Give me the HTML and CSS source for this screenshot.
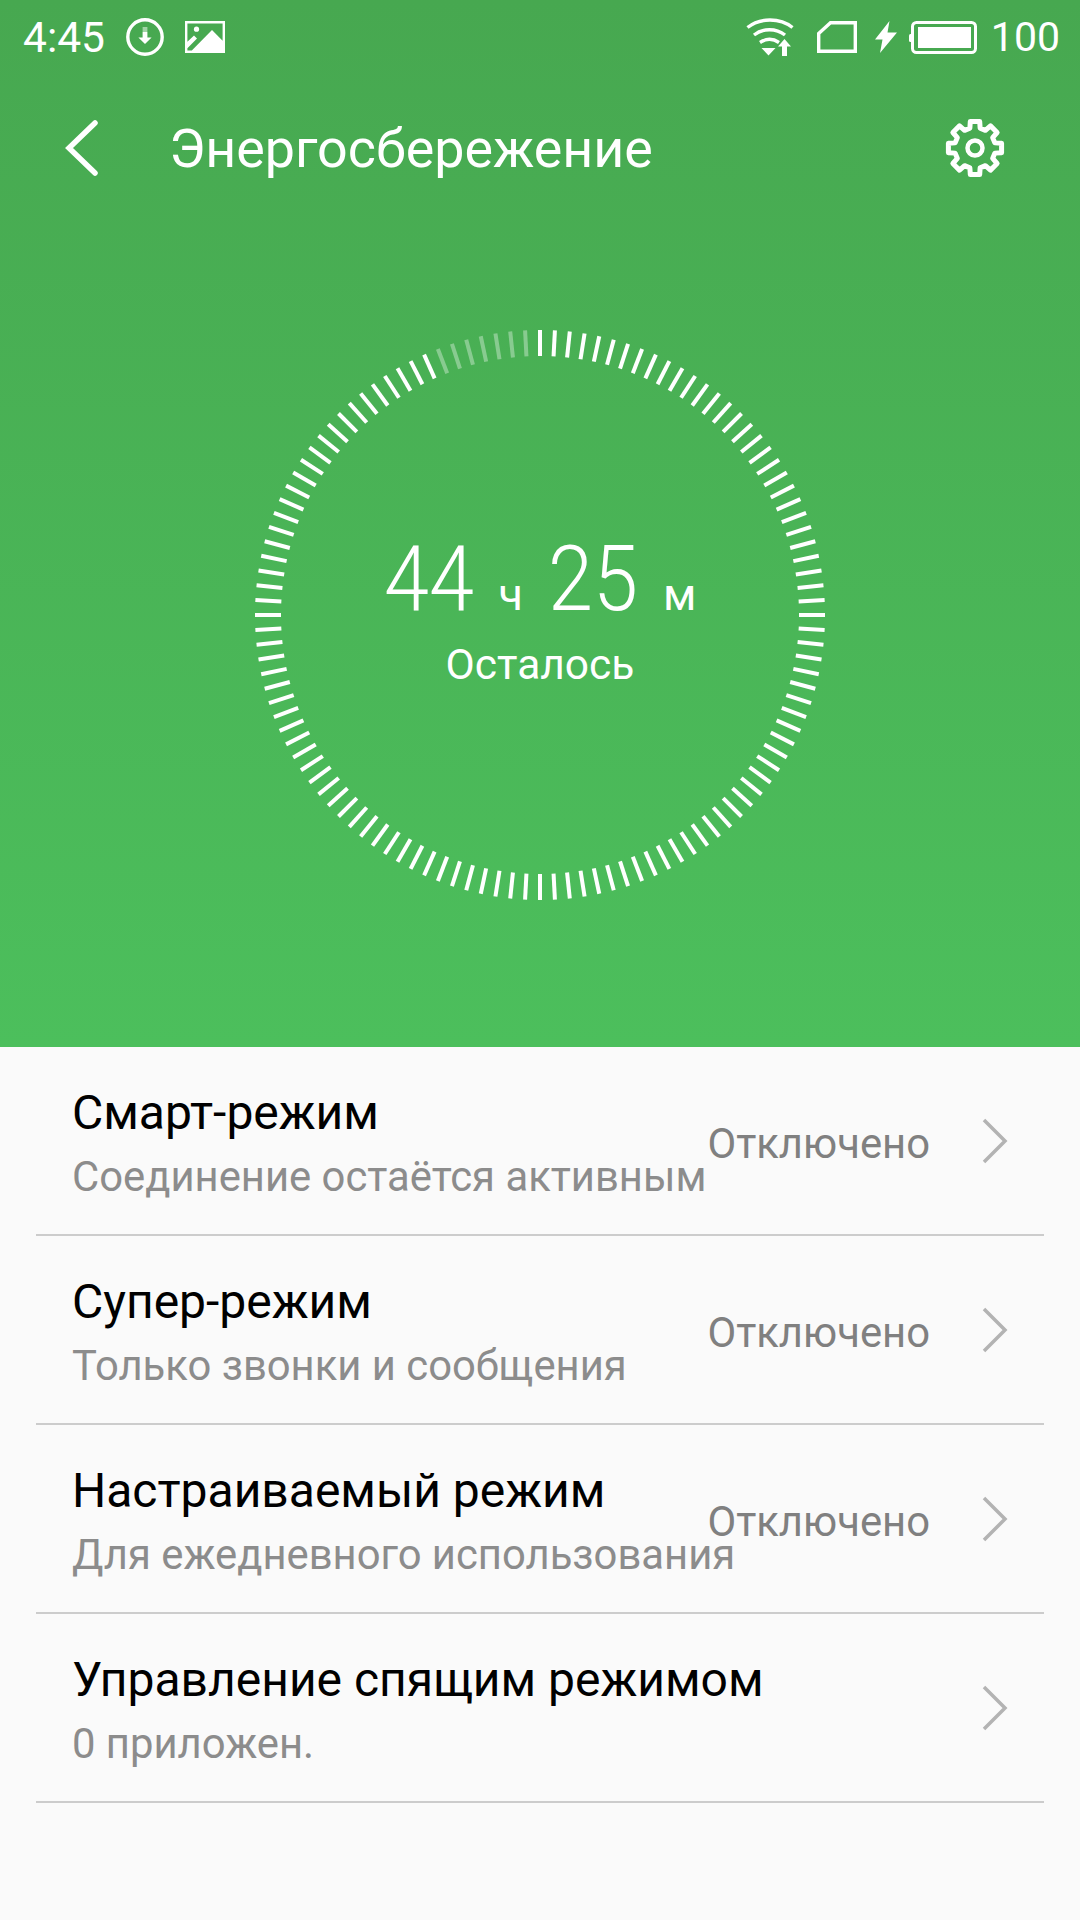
FILE: index.html
```html
<!DOCTYPE html>
<html lang="ru">
<head>
<meta charset="UTF-8">
<meta name="viewport" content="width=device-width, initial-scale=1.0">
<title>Энергосбережение</title>
<link rel="stylesheet" href="styles.css">
</head>
<body>
<div class="hero">
  <div class="status-bar">
    <span class="status-text">4:45</span>
    <svg class="icon-download" width="40" height="40" viewBox="0 0 40 40">
      <circle cx="20" cy="20" r="17.2" fill="none" stroke="#fff" stroke-width="3.4"/>
      <rect x="17.6" y="10" width="4.8" height="5" fill="#fff" opacity="0.5"/>
      <path d="M17.6 15h4.8v5.4h4.2L20 27l-6.6-6.6h4.2z" fill="#fff"/>
    </svg>
    <svg class="icon-image" width="40" height="32" viewBox="0 0 40 32">
      <path fill="#fff" fill-rule="evenodd" d="M0 0h40v32H0zM2.4 2.4v18.4L9 14.6l3 2.8L2.4 27.2v2.4h4.4L27 9l10.6 10.8V2.4z"/>
      <circle cx="11.5" cy="8.2" r="2.6" fill="#fff"/>
    </svg>
    <span class="status-gap"></span>
    <svg class="icon-wifi" width="50" height="38" viewBox="0 0 50 38">
      <path d="M1.5 9.5C14 -0.5 34 -0.5 46.5 9.5M8 17C17 10 30 10 39 17M14 24.500C20 20.500 27 20.500 33 24.500" fill="none" stroke="#fff" stroke-width="3.400"/>
      <path d="M15.500 30h14l-7 7.500zM36 38V28.500h-4L38.500 21l6.500 7.500h-4V38z" fill="#fff"/>
    </svg>
    <svg class="icon-sim" width="40" height="32" viewBox="0 0 40 32">
      <path d="M38.300 1.700H13.500L1.700 12.500v17.800h36.600z" fill="none" stroke="#fff" stroke-width="3.400"/>
    </svg>
    <svg class="icon-bolt" width="22" height="32" viewBox="0 0 22 32">
      <path d="M14.500 0L0 18.500h7.500L5 32 22 11.500h-9.500z" fill="#fff"/>
    </svg>
    <svg class="icon-battery" width="68" height="33" viewBox="0 0 68 33">
      <rect x="0" y="13" width="4" height="8" rx="1.500" fill="#fff"/>
      <rect x="3.500" y="1.500" width="63" height="30" rx="4" fill="none" stroke="#fff" stroke-width="3"/>
      <rect x="9" y="6" width="53" height="21" fill="#fff"/>
    </svg>
    <span class="status-text status-level">100</span>
  </div>

  <div class="toolbar">
    <svg class="back-icon" width="36" height="60" viewBox="0 0 36 60">
      <path d="M31 5L5 30l26 25" fill="none" stroke="#fff" stroke-width="5.500" stroke-linecap="round" stroke-linejoin="miter"/>
    </svg>
    <span class="toolbar-title">Энергосбережение</span>
    <svg class="gear-icon" width="60" height="60" viewBox="-30 -30 60 60">
      <polygon fill="none" stroke="#fff" stroke-width="5" stroke-linejoin="round" points="4.69,-26.59 5.13,-19.85 10.40,-17.66 15.49,-22.12 22.12,-15.49 17.66,-10.40 19.85,-5.13 26.59,-4.69 26.59,4.69 19.85,5.13 17.66,10.40 22.12,15.49 15.49,22.12 10.40,17.66 5.13,19.85 4.69,26.59 -4.69,26.59 -5.13,19.85 -10.40,17.66 -15.49,22.12 -22.12,15.49 -17.66,10.40 -19.85,5.13 -26.59,4.69 -26.59,-4.69 -19.85,-5.13 -17.66,-10.40 -22.12,-15.49 -15.49,-22.12 -10.40,-17.66 -5.13,-19.85 -4.69,-26.59"/>
      <circle r="7.500" fill="none" stroke="#fff" stroke-width="4.500"/>
    </svg>
  </div>

  <div class="gauge">
    <svg id="ticks" class="gauge-ticks" width="570" height="570" viewBox="-285 -285 570 570"></svg>
    <div class="gauge-text">
      <div class="time">
        <span class="time-num">44</span><span class="time-unit">ч</span><span class="time-num">25</span><span class="time-unit">м</span>
      </div>
      <div class="time-label">Осталось</div>
    </div>
  </div>
</div>

<div class="list">
  <div class="row">
    <div class="row-text">
      <div class="row-title">Смарт-режим</div>
      <div class="row-sub">Соединение остаётся активным</div>
    </div>
    <span class="row-value">Отключено</span>
    <svg class="chevron" width="26" height="46" viewBox="0 0 26 46"><path d="M2 2l21 21L2 44" fill="none" stroke="#b3b3b3" stroke-width="3.500"/></svg>
  </div>
  <div class="row">
    <div class="row-text">
      <div class="row-title">Супер-режим</div>
      <div class="row-sub">Только звонки и сообщения</div>
    </div>
    <span class="row-value">Отключено</span>
    <svg class="chevron" width="26" height="46" viewBox="0 0 26 46"><path d="M2 2l21 21L2 44" fill="none" stroke="#b3b3b3" stroke-width="3.500"/></svg>
  </div>
  <div class="row">
    <div class="row-text">
      <div class="row-title">Настраиваемый режим</div>
      <div class="row-sub">Для ежедневного использования</div>
    </div>
    <span class="row-value">Отключено</span>
    <svg class="chevron" width="26" height="46" viewBox="0 0 26 46"><path d="M2 2l21 21L2 44" fill="none" stroke="#b3b3b3" stroke-width="3.500"/></svg>
  </div>
  <div class="row">
    <div class="row-text">
      <div class="row-title">Управление спящим режимом</div>
      <div class="row-sub">0 приложен.</div>
    </div>
    <svg class="chevron" width="26" height="46" viewBox="0 0 26 46"><path d="M2 2l21 21L2 44" fill="none" stroke="#b3b3b3" stroke-width="3.500"/></svg>
  </div>
</div>

<script src="ring.js"></script>
</body>
</html>
```

FILE: styles.css
```css
body {
  margin: 0;
  width: 1080px;
  height: 1920px;
  overflow: hidden;
  background-color: #fafafa;
  font-family: Roboto, "Noto Sans", sans-serif;
}
.hero {
  height: 1047px;
  background: linear-gradient(to bottom, #47a850, #4cbf5c);
  color: #fff;
}
.status-bar {
  display: flex;
  align-items: center;
  height: 74px;
  padding: 0 20px 0 23px;
}
.status-text {
  font-size: 42.5px;
}
.icon-download {
  margin-left: 20px;
}
.icon-image {
  margin-left: 20px;
}
.status-gap {
  flex: 1;
}
.icon-sim {
  margin-left: 21px;
}
.icon-bolt {
  margin-left: 18px;
}
.icon-battery {
  margin-left: 12px;
}
.status-level {
  margin-left: 14px;
  font-size: 41px;
}
.toolbar {
  display: flex;
  align-items: center;
  height: 148px;
  padding: 0 75px 0 64px;
}
.toolbar-title {
  flex: 1;
  margin-left: 69px;
  font-size: 53.8px;
}
.gauge {
  display: grid;
  place-items: center;
  width: 570px;
  height: 570px;
  margin: 108px auto 0;
}
.gauge-ticks,
.gauge-text {
  grid-area: 1 / 1;
}
.gauge-text {
  margin-top: -15px;
  text-align: center;
}
.time {
  display: flex;
  align-items: baseline;
  justify-content: center;
}
.time-num {
  display: inline-block;
  margin: 0 -5px;
  font-size: 90px;
  font-weight: 300;
  transform: scaleX(0.9);
}
.time-unit {
  margin: 0 25px;
  font-size: 45px;
}
.time-unit:last-child {
  margin-right: 0;
}
.time-label {
  margin-top: 8px;
  font-size: 42.5px;
}
.row {
  display: flex;
  align-items: center;
  height: 182px;
  margin: 0 36px;
  padding: 5px 0 0 36px;
  border-bottom: 2px solid #cccccc;
}
.row-text {
  flex: 1;
  min-width: 0;
  white-space: nowrap;
}
.row-title {
  font-size: 48px;
  line-height: 56px;
  color: #000;
}
.row-sub {
  margin-top: 11px;
  font-size: 41.8px;
  line-height: 50px;
  color: #8c8c8c;
}
.row-value {
  margin-right: 52px;
  font-size: 41.8px;
  color: #808080;
}
.chevron {
  margin: -5px 36px 0 0;
}
```

FILE: ring.js
```js
// 120 ticks, one every 3 degrees, the 7 just left of the top are faded
const svg = document.getElementById('ticks');
for (let i = 0; i < 120; i++) {
  const line = document.createElementNS('http://www.w3.org/2000/svg', 'line');
  line.setAttribute('y1', -285);
  line.setAttribute('y2', -259);
  line.setAttribute('stroke', '#fff');
  line.setAttribute('stroke-width', 4);
  line.setAttribute('transform', `rotate(${i * 3})`);
  if (i >= 113) {
    line.setAttribute('opacity', 0.35);
  }
  svg.appendChild(line);
}
```
